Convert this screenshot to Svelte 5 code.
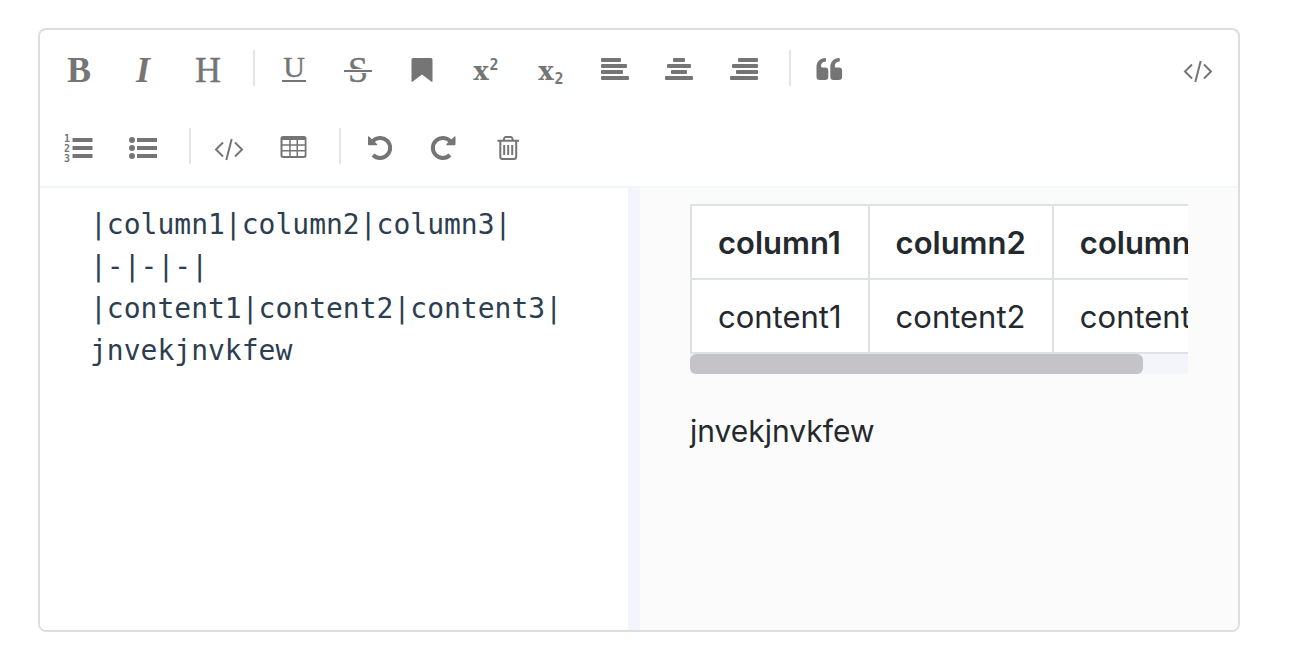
<script>
  let source = $state('|column1|column2|column3|\n|-|-|-|\n|content1|content2|content3|\njnvekjnvkfew');

  const rows = [
    ['bold', 'italic', 'header', '|', 'underline', 'strikethrough', 'mark', 'superscript', 'subscript', 'align left', 'align center', 'align right', '|', 'quote'],
    ['ordered list', 'unordered list', '|', 'code', 'table', '|', 'undo', 'redo', 'trash']
  ];

  const head = ['column1', 'column2', 'column3'];
  const body = ['content1', 'content2', 'content3'];

  let viewWidth = $state(0);
  let tableWidth = $state(0);
  let scrolled = $state(0);
  const thumb = $derived(tableWidth ? Math.min(100, (viewWidth / tableWidth) * 100) : 100);
  const start = $derived(tableWidth ? (scrolled / tableWidth) * 100 : 0);
</script>

{#snippet icon(name)}
  <svg class="icon" viewBox="0 0 32 32" aria-hidden="true">
    {#if name === 'bold'}
      <text class="serif heavy" x="16" y="28">B</text>
    {:else if name === 'italic'}
      <text class="serif heavy slanted" x="16" y="28">I</text>
    {:else if name === 'header'}
      <text class="serif outlined" x="16" y="28">H</text>
    {:else if name === 'underline'}
      <text class="serif medium outlined" x="17" y="23">U</text>
      <path d="M5 26h24v2H5z" />
    {:else if name === 'strikethrough'}
      <text class="serif outlined" x="16" y="28">S</text>
      <path class="gap" d="M2 15h28v4H2z" />
      <path d="M2 16h28v2H2z" />
    {:else if name === 'mark'}
      <path d="M7 4h18q1.500 0 1.500 1.500V27q0 1.500-1.300.600L16 20.500l-9.200 7.100q-1.300.900-1.300-.600V5.500Q5.500 4 7 4z" />
    {:else if name === 'superscript'}
      <text class="slab" x="11" y="26">x</text>
      <text class="digit" x="24" y="16">2</text>
    {:else if name === 'subscript'}
      <text class="slab" x="11" y="26">x</text>
      <text class="digit" x="24" y="30">2</text>
    {:else if name === 'align left'}
      <rect x="2" y="4" width="20" height="4" rx="1" /><rect x="2" y="10" width="26" height="4" rx="1" />
      <rect x="2" y="16" width="22" height="4" rx="1" /><rect x="2" y="22" width="28" height="4" rx="1" />
    {:else if name === 'align center'}
      <rect x="10" y="4" width="12" height="4" rx="1" /><rect x="4" y="10" width="24" height="4" rx="1" />
      <rect x="8" y="16" width="16" height="4" rx="1" /><rect x="2" y="22" width="28" height="4" rx="1" />
    {:else if name === 'align right'}
      <rect x="10" y="4" width="20" height="4" rx="1" /><rect x="4" y="10" width="26" height="4" rx="1" />
      <rect x="8" y="16" width="22" height="4" rx="1" /><rect x="2" y="22" width="28" height="4" rx="1" />
    {:else if name === 'quote'}
      <path d="M3.500 13C3.500 7.500 7.500 4 12 4q1 0 1 1v1.800q0 1-1 1c-2.500 0-4 2-4 4.200q0 1.500 1.500 1.500h2.500q3.300 0 3.300 3.300v5.900q0 3.300-3.300 3.300H6.800q-3.300 0-3.300-3.300zM17.300 13c0-5.500 4-9 8.500-9q1 0 1 1v1.800q0 1-1 1c-2.500 0-4 2-4 4.200q0 1.500 1.500 1.500h2.500q3.300 0 3.300 3.300v5.900q0 3.300-3.300 3.300h-5.200q-3.300 0-3.300-3.300z" />
    {:else if name === 'ordered list'}
      <text class="number" x="4" y="10">1</text><text class="number" x="4" y="20">2</text><text class="number" x="4" y="30">3</text>
      <path d="M9.500 6h20v4h-20zM9.500 14h20v4h-20zM9.500 22h20v4h-20z" />
    {:else if name === 'unordered list'}
      <circle cx="5" cy="8" r="3" /><circle cx="5" cy="16" r="3" /><circle cx="5" cy="24" r="3" />
      <path d="M10 6h20v4H10zM10 14h20v4H10zM10 22h20v4H10z" />
    {:else if name === 'code'}
      <path class="line" d="M10 10.500 3 17.500l7 7M22 10.500l7 7-7 7M18.700 7l-5.400 21" />
    {:else if name === 'table'}
      <path fill-rule="evenodd" d="M6 4h21q2.500 0 2.500 2.500v17Q29.500 26 27 26H6q-2.500 0-2.500-2.500v-17Q3.500 4 6 4zM5.500 8v4.200h6.700V8zM13.700 8v4.200h5.800V8zM21 8v4.200h6.700V8zM5.500 13.700v4.200h6.700v-4.200zM13.700 13.700v4.200h5.800v-4.200zM21 13.700v4.200h6.700v-4.200zM5.500 19.400v3.600q0 1 1 1h5.700v-4.600zM13.700 19.400V24h5.800v-4.600zM21 19.400V24h5.700q1 0 1-1v-3.600z" />
    {:else if name === 'undo'}
      <path class="arc" d="M9.500 9.500a10 10 0 1 1 .500 13.500" />
      <path d="M5 4.800q0-1 1-.300l8 7.500q.800 1-.300 1.300H6q-1 0-1-1z" />
    {:else if name === 'redo'}
      <path class="arc" d="M23.500 9.500a10 10 0 1 0-.500 13.500" />
      <path d="M28.500 4.800q0-1-1-.300l-8 7.500q-.800 1 .300 1.300h7.700q1 0 1-1z" />
    {:else if name === 'trash'}
      <path class="line" d="M5.500 8.800H27M11.500 8.500l.800-2.500q.400-1 1.400-1h5.100q1 0 1.400 1l.800 2.500M8.300 9v15.500q0 2.500 2.300 2.500h11.300q2.300 0 2.300-2.500V9" />
      <path class="line" d="M12.200 13v10M16.200 13v10M20.200 13v10" />
    {/if}
  </svg>
{/snippet}

<main class="editor">
  <header class="toolbar">
    {#each rows as items, r}
      <div class="row">
        <div class="tools">
          {#each items as item}{#if item === '|'}<span class="divider"></span>{:else}<button type="button" aria-label={item}>{@render icon(item)}</button>{/if}{' '}{/each}
        </div>
        {#if r === 0}
          <button type="button" aria-label="toggle html">{@render icon('code')}</button>
        {/if}
      </div>
    {/each}
  </header>

  <div class="panes">
    <textarea aria-label="Markdown source" spellcheck="false" bind:value={source}></textarea>
    <section class="preview">
      <div class="scroller" bind:clientWidth={viewWidth} onscroll={(e) => (scrolled = e.currentTarget.scrollLeft)}>
        <div class="sheet" bind:clientWidth={tableWidth}>
          <table>
            <thead><tr>{#each head as cell}<th>{cell}</th>{/each}</tr></thead>
            <tbody><tr>{#each body as cell}<td>{cell}</td>{/each}</tr></tbody>
          </table>
        </div>
      </div>
      <div class="track"><div class="thumb" style="width: {thumb}%; margin-left: {start}%"></div></div>
      <p>jnvekjnvkfew</p>
    </section>
  </div>
</main>

<style>
  :global(body) { background: #fff; }
  .editor {
    margin: 28px 70px 20px 38px;
    border: 2px solid #dddde4;
    border-radius: 8px;
    overflow: hidden;
  }
  .toolbar { border-bottom: 2px solid #f2f6fc; }
  .row {
    display: flex;
    justify-content: space-between;
    padding: 0 12px 0 11px;
  }
  .tools { font: 30px/56px "Liberation Sans", sans-serif; }
  button {
    display: inline-flex;
    align-items: center;
    justify-content: center;
    width: 56px;
    height: 56px;
    margin: 12px 0 10px;
    padding: 0;
    border: 0;
    border-radius: 6px;
    background: none;
    color: #757575;
    vertical-align: top;
    cursor: pointer;
  }
  button:hover { background: #f0f0f0; }
  .divider {
    display: inline-block;
    width: 2px;
    height: 36px;
    margin: 20px 2px 0 9px;
    background: #e5e5e5;
    vertical-align: top;
  }
  .icon { width: 32px; height: 32px; fill: currentColor; overflow: visible; }
  .icon text { text-anchor: middle; }
  .serif { font: 36px "Liberation Serif", serif; }
  .heavy { font-weight: 700; }
  .slanted { font-style: italic; }
  .medium { font-size: 30px; }
  .outlined { stroke: currentColor; stroke-width: 0.4; }
  .slab { font: bold 26px "DejaVu Serif", serif; }
  .digit { font: bold 15px "DejaVu Sans Mono", monospace; }
  .number { font: bold 10px "DejaVu Sans Mono", monospace; }
  .gap { fill: #fff; }
  .line { fill: none; stroke: currentColor; stroke-width: 2; }
  .arc { fill: none; stroke: currentColor; stroke-width: 4; }

  .panes {
    display: grid;
    grid-template-columns: calc(50% + 1px) 1fr;
    min-height: 442px;
  }
  textarea {
    display: block;
    box-sizing: border-box;
    width: 100%;
    margin: 0;
    padding: 16px 0 16px 50px;
    border: 0;
    border-right: 12px solid #f4f5fa;
    outline: 0;
    resize: none;
    background: #fff;
    color: #2c3e50;
    font: 28px/42px "DejaVu Sans Mono", monospace;
  }
  .preview {
    min-width: 0;
    padding: 16px 50px;
    background: #fbfbfb;
    color: #24292e;
    font: 30px/48px Inter, sans-serif;
  }
  .scroller { overflow-x: auto; scrollbar-width: none; }
  .sheet { width: max-content; }
  .track { height: 20px; margin-bottom: 33px; background: #f4f5fa; }
  .thumb { height: 100%; border-radius: 6px; background: #c3c3c8; }
  table { border-collapse: collapse; background: #fff; font-size: 31px; }
  th, td { padding: 13px 26px 11px; border: 2px solid #dfe2e5; text-align: left; }
  th { font-weight: 600; }
  p { margin: 0; }
</style>
